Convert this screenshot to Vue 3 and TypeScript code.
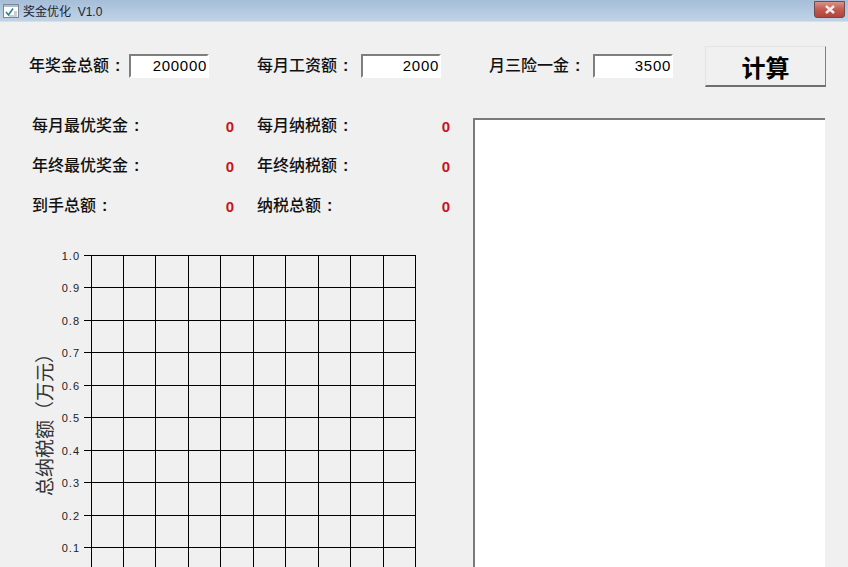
<script setup lang="ts">
const inputs = [
  { label: '年奖金总额', value: '200000' },
  { label: '每月工资额', value: '2000' },
  { label: '月三险一金', value: '3500' },
]
const stats = [
  ['每月最优奖金', '每月纳税额'],
  ['年终最优奖金', '年终纳税额'],
  ['到手总额', '纳税总额'],
]
const hLines = [255.5, 287.5, 320.5, 352.5, 385.5, 417.5, 450.5, 482.5, 515.5, 547.5].map((y) => y - 240)
const vLines = [91.5, 123.5, 155.5, 188.5, 220.5, 253.5, 285.5, 318.5, 350.5, 383.5, 415.5]
const ticks = ['1.0', '0.9', '0.8', '0.7', '0.6', '0.5', '0.4', '0.3', '0.2', '0.1']
</script>

<template>
  <div class="window">
    <header class="titlebar">
      <svg class="app-icon" width="16" height="16" viewBox="0 0 16 16">
        <rect x="0.5" y="1.5" width="15" height="13" fill="#fff" stroke="#7d8794" />
        <rect x="1" y="2" width="14" height="2" fill="#aebfd4" />
        <path d="M3 9l2.5 3L10 5.5" fill="none" stroke="#2c7f8e" stroke-width="1.5" />
        <path d="M11 9h3M11 11h3M6 13h8" stroke="#8d9db3" />
      </svg>
      <span class="title">奖金优化&nbsp;&nbsp;V1.0</span>
      <div class="close">
        <svg width="14" height="9" viewBox="0 0 14 9">
          <path d="M3 1l8 7M11 1L3 8" stroke="#f4ecec" stroke-width="2.4" fill="none" />
        </svg>
      </div>
    </header>

    <main class="client">
      <section class="top-row">
        <div class="fields">
          <div v-for="f in inputs" :key="f.label" class="field">
            <span class="label">{{ f.label }}<span class="colon">:</span></span>
            <div class="input">{{ f.value }}</div>
          </div>
        </div>
        <button class="calc">计算</button>
      </section>

      <section class="body-row">
        <div class="left">
          <div class="stats">
            <div v-for="row in stats" :key="row[0]" class="stat-row">
              <div v-for="s in row" :key="s" class="stat">
                <span class="label">{{ s }}<span class="colon">:</span></span>
                <span class="value">0</span>
              </div>
            </div>
          </div>
          <svg class="chart" width="440" height="327" viewBox="0 0 440 327">
            <g stroke="#000" stroke-width="1" shape-rendering="crispEdges">
              <line v-for="y in hLines" :key="y" x1="84" :y1="y" x2="416" :y2="y" />
              <line v-for="x in vLines" :key="x" :x1="x" y1="15" :x2="x" y2="327" />
            </g>
            <text
              v-for="(t, i) in ticks"
              :key="t"
              class="tick"
              x="80"
              :y="hLines[i] + 4"
              text-anchor="end"
            >{{ t }}</text>
            <text class="axis" transform="translate(52 256) rotate(-90)">总纳税额（万元）</text>
          </svg>
        </div>
        <div class="output"></div>
      </section>
    </main>
  </div>
</template>

<style>
html, body { margin: 0; padding: 0; overflow: hidden; }
</style>

<style scoped>
.window {
  width: 848px;
  height: 567px;
  overflow: hidden;
  display: flex;
  flex-direction: column;
  background: #f0f0f0;
  font-family: "Liberation Sans", "Noto Sans CJK SC", sans-serif;
  color: #000;
}
.titlebar {
  height: 22px;
  flex: none;
  display: flex;
  align-items: center;
  padding: 0 3px 0 3px;
  background: linear-gradient(180deg, #a5bdd7 0%, #b3c9e0 50%, #c0d3e6 100%);
  border-bottom: 1px solid #d5e0ea;
  box-sizing: border-box;
}
.app-icon { flex: none; }
.title {
  margin-left: 4px;
  font-size: 12px;
  color: #1c2430;
}
.close {
  margin-left: auto;
  margin-top: -3px;
  width: 31px;
  height: 17px;
  box-sizing: border-box;
  display: flex;
  align-items: center;
  justify-content: center;
  background: linear-gradient(180deg, #d9938a 0%, #c25a50 50%, #b0443a 100%);
  border: 1px solid #6f4a4c;
  border-radius: 0 0 3px 3px;
}
.client {
  flex: 1;
  min-height: 0;
  display: flex;
  flex-direction: column;
}
.top-row {
  display: flex;
  align-items: flex-start;
  padding: 24px 22px 0 29px;
  height: 92px;
  box-sizing: border-box;
}
.fields {
  display: flex;
  gap: 48px;
  padding-top: 8px;
}
.field {
  display: flex;
  align-items: center;
  width: 184px;
}
.field:first-child { width: 180px; }
.label {
  font-size: 16px;
  line-height: 24px;
  font-weight: 500;
  color: #111;
  white-space: nowrap;
}
.colon {
  margin-left: 6px;
  font-weight: 700;
}
.input {
  margin-left: auto;
  width: 80px;
  height: 24px;
  box-sizing: border-box;
  background: #fff;
  border: 2px solid;
  border-color: #7f7f7f #fff #fff #7f7f7f;
  text-align: right;
  font-family: "Liberation Sans", sans-serif;
  font-size: 15px;
  letter-spacing: 0.7px;
  line-height: 20px;
  padding: 0;
}
.calc {
  margin-left: auto;
  width: 121px;
  height: 41px;
  padding: 0;
  background: #f0f0f0;
  border: 1px solid;
  border-color: #e4e4e4 #7f7f7f #6f6f6f #e4e4e4;
  border-bottom-width: 2px;
  font-family: inherit;
  font-size: 24px;
  font-weight: 700;
  color: #000;
}
.body-row {
  flex: 1;
  min-height: 0;
  display: flex;
  padding-right: 23px;
}
.left {
  width: 473px;
  flex: none;
  display: flex;
  flex-direction: column;
}
.stats {
  display: flex;
  flex-direction: column;
  gap: 16px;
  padding: 0 23px 0 32px;
  height: 126px;
  box-sizing: border-box;
}
.stat-row {
  display: grid;
  grid-template-columns: 202px 193px;
  column-gap: 23px;
}
.stat {
  display: flex;
  justify-content: space-between;
  align-items: center;
}
.value {
  color: #c8141a;
  font-family: "Liberation Sans", sans-serif;
  font-size: 15px;
  font-weight: 700;
}
.chart {
  display: block;
  flex: none;
}
.tick {
  font-family: "Liberation Sans", sans-serif;
  font-size: 11px;
  letter-spacing: 1px;
  fill: #222;
}
.axis {
  font-family: "Noto Sans CJK SC", sans-serif;
  font-size: 19px;
  fill: #333;
}
.output {
  flex: 1;
  height: 600px;
  background: #fff;
  border-top: 2px solid #7a7a7a;
  border-left: 2px solid #7a7a7a;
  box-sizing: border-box;
  margin-top: 4px;
}
</style>
